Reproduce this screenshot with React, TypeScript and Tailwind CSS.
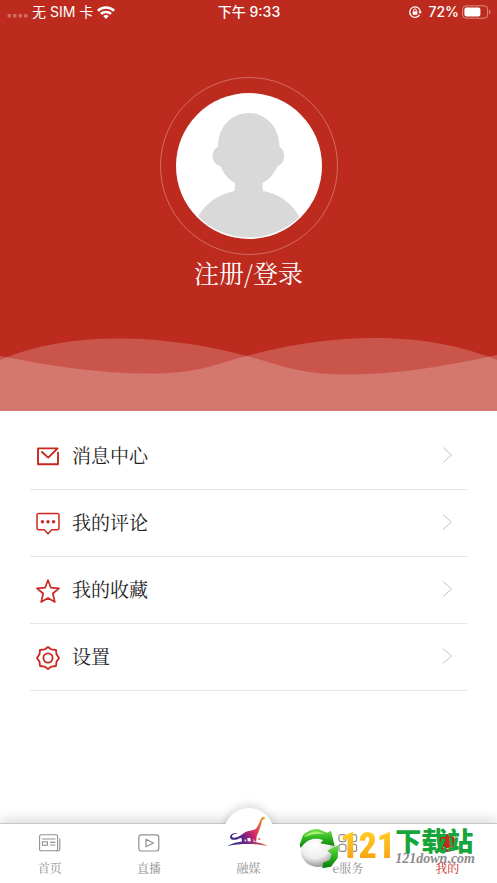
import React from 'react';

type IconProps = { className?: string };

const MailIcon: React.FC<IconProps> = ({ className }) => (
  <svg viewBox="0 0 24 24" fill="none" stroke="currentColor" strokeWidth="1.9" strokeLinecap="round" strokeLinejoin="round" className={className}>
    <path d="M22 7.600V19.200H2V3.400H21.600L12.200 12.600L6 7" />
  </svg>
);

const CommentIcon: React.FC<IconProps> = ({ className }) => (
  <svg viewBox="0 0 24 24" fill="none" stroke="currentColor" strokeWidth="1.5" strokeLinejoin="round" className={className}>
    <path d="M2.800 1.400h18.400a1.800 1.800 0 0 1 1.800 1.800v12.800a1.800 1.800 0 0 1-1.800 1.800h-5.400L12 21.800l-3.800-4H2.800a1.800 1.800 0 0 1-1.800-1.800V3.200A1.800 1.800 0 0 1 2.800 1.400z" />
    <g fill="currentColor" stroke="none">
      <circle cx="6.400" cy="9.800" r="1.700" />
      <circle cx="12" cy="9.800" r="1.700" />
      <circle cx="17.600" cy="9.800" r="1.700" />
    </g>
  </svg>
);

const StarIcon: React.FC<IconProps> = ({ className }) => (
  <svg viewBox="0 0 24 24" fill="none" stroke="currentColor" strokeWidth="1.7" strokeLinejoin="round" className={className}>
    <path d="M12 1.200L14.900 8.700L23 9.300L16.800 14.500L18.800 23L12 19L5.200 23L7.200 14.500L1 9.300L9.100 8.700z" />
  </svg>
);

const GearIcon: React.FC<IconProps> = ({ className }) => (
  <svg viewBox="0 0 24 24" fill="none" stroke="currentColor" strokeWidth="1.8" strokeLinejoin="round" className={className}>
    <path d="M12 1L15.400 3.400L20 4L20.500 8.300L23 12L20.500 15.700L20 20L15.400 20.600L12 23L8.600 20.600L4 20L3.500 15.700L1 12L3.500 8.300L4 4L8.600 3.400z" />
    <circle cx="12" cy="12" r="4.600" />
  </svg>
);

const NewsIcon: React.FC<IconProps> = ({ className }) => (
  <svg viewBox="0 0 22 18" fill="none" stroke="currentColor" strokeWidth="1.1" className={className}>
    <rect x="0.6" y="0.8" width="18" height="16" rx="1.4" />
    <path d="M20.800 4.500V15.200a1.600 1.600 0 0 1-1.600 1.600H17M3 5h13.400M11 8.400h5.400M11 11h5.400" />
    <rect x="3.4" y="7.8" width="5" height="3.4" />
  </svg>
);

const LiveIcon: React.FC<IconProps> = ({ className }) => (
  <svg viewBox="0 0 22 18" fill="none" stroke="currentColor" strokeWidth="1.2" strokeLinejoin="round" className={className}>
    <rect x="0.8" y="0.8" width="20" height="16.2" rx="2.4" />
    <path d="M8 5.200L15.400 9L8 12.800z" />
  </svg>
);

const ServiceIcon: React.FC<IconProps> = ({ className }) => (
  <svg viewBox="0 0 22 18" fill="none" stroke="currentColor" strokeWidth="1.2" className={className}>
    <rect x="2" y="0.6" width="7" height="7" rx="2" />
    <rect x="12.6" y="0.6" width="7" height="7" rx="2" />
    <rect x="2" y="10.4" width="7" height="7" rx="2" />
    <rect x="12.6" y="10.4" width="7" height="7" rx="2" />
  </svg>
);

const UserIcon: React.FC<IconProps> = ({ className }) => (
  <svg viewBox="0 0 22 18" className={className}>
    <circle cx="11" cy="9" r="9" fill="currentColor" />
    <path d="M6.500 12.500c2 3 7 3 9 0" fill="none" stroke="#fff" />
  </svg>
);

const DinosaurLogo: React.FC<IconProps> = ({ className }) => (
  <svg viewBox="110 48 124 92" className={className}>
    <defs>
      <linearGradient id="dino" x1="110" y1="130" x2="225" y2="60" gradientUnits="userSpaceOnUse">
        <stop offset="0" stopColor="#1b2f8f" />
        <stop offset="0.35" stopColor="#5b2390" />
        <stop offset="0.6" stopColor="#cf2566" />
        <stop offset="1" stopColor="#f39a1e" />
      </linearGradient>
      <linearGradient id="ground" x1="110" y1="0" x2="232" y2="0" gradientUnits="userSpaceOnUse">
        <stop offset="0" stopColor="#1b2f8f" />
        <stop offset="0.5" stopColor="#7c2487" />
        <stop offset="1" stopColor="#ee6a3a" />
      </linearGradient>
    </defs>
    <path
      fill="url(#dino)"
      d="M223 52C220 49 215 50 212 54C208 61 205 72 199 82C195 88 189 89 183 91C172 92 163 95 157 101C150 107 142 111 132 113C124 114 121 109 125 105C129 101 135 101 140 99C130 98 120 101 118 108C116 116 124 120 134 119C141 118 146 115 152 113L154 126H161L163 115L167 124H171L170 114L179 114L181 127H189L189 115L193 124H197L198 108C203 98 207 88 210 78C213 69 214 62 217 58L222 57Z"
    />
    <path fill="url(#ground)" d="M111 138C140 119 200 119 232 138C200 130 145 130 111 138Z" />
    <circle cx="206" cy="117" r="3.5" fill="#ef7d4a" />
  </svg>
);

const MENU = [
  { label: '消息中心', Icon: MailIcon },
  { label: '我的评论', Icon: CommentIcon },
  { label: '我的收藏', Icon: StarIcon },
  { label: '设置', Icon: GearIcon },
];

const StatusBar: React.FC = () => (
  <div className="grid h-6 grid-cols-3 items-center pl-[7px] pr-[6px] font-['Inter','Noto_Sans_CJK_SC',sans-serif] text-sm font-medium text-white">
    <div className="flex items-center">
      <svg viewBox="0 0 21 4" className="mt-2 h-1 w-[21px]" fill="#fff" fillOpacity="0.3">
        <rect x="0.5" width="3.6" height="3.6" rx="1" />
        <rect x="6" width="3.6" height="3.6" rx="1" />
        <rect x="11.5" width="3.6" height="3.6" rx="1" />
        <rect x="17" width="3.6" height="3.6" rx="1" />
      </svg>
      <span className="ml-1 whitespace-nowrap font-normal">无 SIM 卡</span>
      <svg viewBox="0 0 18 13" className="ml-1 h-[13px] w-[18px]" fill="none" stroke="#fff" strokeWidth="2.6">
        <path d="M0.900 4.700C5.300 0.500 12.700 0.500 17.100 4.700" />
        <path d="M3.900 7.900C6.800 5.300 11.200 5.300 14.100 7.900" />
        <path d="M9 13L6.200 10.100C7.700 8.700 10.300 8.700 11.800 10.100z" fill="#fff" stroke="none" />
      </svg>
    </div>
    <div className="whitespace-nowrap text-center">下午 9:33</div>
    <div className="flex items-center justify-end">
      <svg viewBox="0 0 14 14" className="h-[14px] w-[14px]" fill="none" stroke="#fff" strokeWidth="1.3">
        <path d="M11.600 9.800A5.300 5.300 0 1 1 12.300 6.600" />
        <path d="M10.300 6.600h3.600l-1.800 2.400z" fill="#fff" stroke="none" />
        <rect x="4.6" y="6.2" width="4.8" height="3.6" rx="0.5" fill="#fff" stroke="none" />
        <path d="M5.600 6.400V5.400a1.400 1.400 0 0 1 2.800 0v1" strokeWidth="1" />
      </svg>
      <span className="ml-1.5">72%</span>
      <svg viewBox="0 0 29 14" className="ml-[3px] h-[14px] w-[29px]">
        <rect x="0.6" y="0.8" width="25" height="12.4" rx="3.4" fill="none" stroke="#fff" strokeOpacity="0.45" />
        <rect x="2.4" y="2.6" width="16" height="8.8" rx="1.8" fill="#fff" />
        <path d="M27.200 4.800c1.800 0.800 1.800 3.600 0 4.400z" fill="#fff" fillOpacity="0.5" />
      </svg>
    </div>
  </div>
);

const Profile: React.FC = () => (
  <header className="bg-[#bd2b1f]">
    <StatusBar />
    <div className="flex flex-col items-center pt-[53px]">
      <div className="flex size-[178px] items-center justify-center rounded-full border border-white/30">
        <svg viewBox="0 0 146 146" className="size-[146px]">
          <defs>
            <clipPath id="avatar">
              <circle cx="73" cy="73" r="71.5" />
            </clipPath>
          </defs>
          <circle cx="73" cy="73" r="73" fill="#fff" />
          <g fill="#d9d9d9" clipPath="url(#avatar)">
            <path d="M73 20C91 20 103.500 35 103.500 54C110 57 110 71 101.500 73C98 81 93 87 86.500 90L87 98C104 101 119 112 125 128V146H20V128C27 111 43 101 58.500 98L59 90C52 86 47 80 44.500 73C35 71 34 57 42 54C42 35 54 20 73 20Z" />
          </g>
        </svg>
      </div>
      <button type="button" className="text-[25px] leading-[34px] text-white">
        注册/登录
      </button>
    </div>
    <svg viewBox="0 0 497 74" preserveAspectRatio="none" className="mt-12 block h-[74px] w-full" fill="#fff" fillOpacity="0.2">
      <path d="M0 23C35 8 75 1.500 118 1.500C165 1.500 210 9 247 19C280 28 300 37.500 350 37.500C400 37.500 450 28 497 18V74H0Z" />
      <path d="M0 19C50 29 100 36.500 150 36.500C200 36.500 215 27 247 19C290 7 335 1 375 1C425 1 465 10 497 23V74H0Z" />
    </svg>
  </header>
);

const Menu: React.FC = () => (
  <ul className="flex-1 px-[30px] pt-3">
    {MENU.map(({ label, Icon }) => (
      <li key={label} className="border-b border-[#e6e6e6]">
        <a href="#" className="flex h-[66px] items-center pb-0.5 pl-1.5 pr-[14px] text-[19px] text-[#222]">
          <Icon className="mt-1 size-6 text-[#c9281e]" />
          <span className="ml-3 flex-1">{label}</span>
          <svg viewBox="0 0 11 18" className="h-[18px] w-[11px]" fill="none" stroke="#c4c4c4" strokeWidth="1">
            <path d="M1 1.500L9.500 9L1 16.500" />
          </svg>
        </a>
      </li>
    ))}
  </ul>
);

const SiteMark: React.FC = () => (
  <div className="pointer-events-none absolute right-[22px] top-1 flex items-start">
    <svg viewBox="0 0 123 123" className="h-[41px] w-[41px]">
      <defs>
        <radialGradient id="ball" cx="0.4" cy="0.3" r="0.7">
          <stop offset="0" stopColor="#fff" />
          <stop offset="0.6" stopColor="#eee" />
          <stop offset="1" stopColor="#999" />
        </radialGradient>
        <linearGradient id="leaf" x1="0" y1="0" x2="0" y2="1">
          <stop offset="0" stopColor="#7be04d" />
          <stop offset="0.5" stopColor="#2bb51f" />
          <stop offset="1" stopColor="#087a0c" />
        </linearGradient>
      </defs>
      <ellipse cx="58" cy="70" rx="52" ry="47" fill="url(#ball)" />
      <path d="M2 50L12 22C26 8 40 2 58 3L84 14L96 8L107 54L64 46L72 36C48 28 24 32 5 60Z" fill="url(#leaf)" />
      <path d="M85 68L119 50L116 90L96 116L70 121L72 104L92 96L98 78Z" fill="url(#leaf)" />
      <path d="M14 28C32 8 56 6 78 18C58 16 36 18 14 28Z" fill="#a7ef75" />
    </svg>
    <span className="bg-gradient-to-b from-[#ffd42a] to-[#f79a0c] bg-clip-text font-['Roboto_Condensed','Roboto',sans-serif] text-4xl font-black leading-9 text-transparent">
      121
    </span>
    <span className="flex flex-col">
      <span className="font-['Noto_Sans_CJK_SC',sans-serif] text-[26px] font-black leading-6 text-[#15a53a]">下载站</span>
      <span className="font-['Liberation_Serif',serif] text-sm font-bold italic leading-[14px] text-[#8c8c8c]">121down.com</span>
    </span>
  </div>
);

const TABS = [
  { label: '首页', Icon: NewsIcon },
  { label: '直播', Icon: LiveIcon },
  { label: '融媒', Icon: null },
  { label: 'e服务', Icon: ServiceIcon },
  { label: '我的', Icon: UserIcon, active: true },
];

const TabBar: React.FC = () => (
  <nav className="relative border-t border-[#c8c8c8] bg-white shadow-[0_-3px_12px_rgba(0,0,0,0.16)]">
    <div className="absolute -top-4 left-1/2 size-[50px] -translate-x-1/2 rounded-full bg-white shadow-[0_-3px_8px_rgba(0,0,0,0.14)]" />
    <div className="relative grid h-[59px] grid-cols-5 bg-white">
      {TABS.map(({ label, Icon, active }) => (
        <a
          key={label}
          href="#"
          className={`relative flex flex-col items-center pt-[10px] text-xs ${active ? 'text-[#c9281e]' : 'text-[#909090]'}`}
        >
          {Icon ? (
            <Icon className="h-[18px] w-[22px]" />
          ) : (
            <span className="relative h-[18px]">
              <span className="absolute -top-6 left-1/2 size-[50px] -translate-x-1/2 rounded-full bg-white" />
              <DinosaurLogo className="absolute -top-[18px] left-1/2 h-[31px] w-[41px] max-w-none -translate-x-1/2" />
            </span>
          )}
          <span className="mt-2 leading-4">{label}</span>
        </a>
      ))}
    </div>
    <SiteMark />
  </nav>
);

const App: React.FC = () => {
  return (
    <div className="flex min-h-screen flex-col bg-white font-['Noto_Serif_CJK_SC','Liberation_Serif','Noto_Sans_CJK_SC',serif]">
      <Profile />
      <Menu />
      <TabBar />
    </div>
  );
};

export default App;
